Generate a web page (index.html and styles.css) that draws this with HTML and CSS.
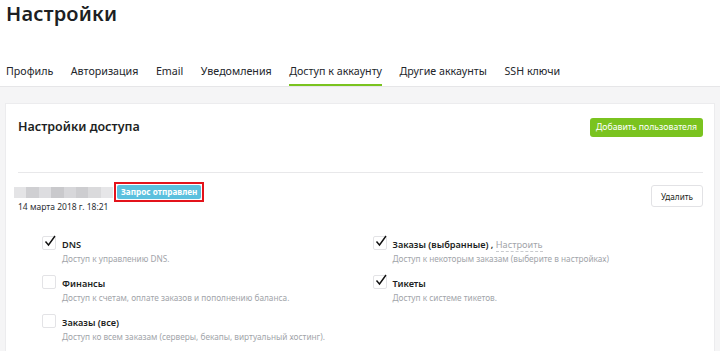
FILE: index.html
```html
<!DOCTYPE html>
<html lang="ru">
<head>
<meta charset="utf-8">
<link rel="stylesheet" href="styles.css">
</head>
<body>
<div class="top">
  <h1 class="page-title">Настройки</h1>
  <nav class="tabs">
    <a class="tab">Профиль</a>
    <a class="tab">Авторизация</a>
    <a class="tab">Email</a>
    <a class="tab">Уведомления</a>
    <a class="tab active">Доступ к аккаунту</a>
    <a class="tab">Другие аккаунты</a>
    <a class="tab">SSH ключи</a>
  </nav>
</div>
<div class="content">
  <div class="card">
    <div class="card-head">
      <h2 class="card-title">Настройки доступа</h2>
      <button class="btn-green">Добавить пользователя</button>
    </div>
    <div class="sep"></div>
    <div class="user-row">
      <div class="user-info">
        <div class="user-line">
          <span class="blur">
            <i class="b1"></i><i class="b2"></i><i class="b3"></i><i class="b4"></i><i class="b5"></i><i class="b6"></i><i class="b7"></i><i class="b8"></i>
          </span>
          <span class="badge-wrap"><span class="badge">Запрос отправлен</span></span>
        </div>
        <div class="date">14 марта 2018 г. 18:21</div>
      </div>
      <button class="btn-white">Удалить</button>
    </div>
    <div class="perms">
      <div class="col">
        <div class="perm">
          <span class="cb checked"><svg viewBox="0 0 14 14" width="14" height="14"><path d="M2.5 7.5 L5.5 11 L12 2" fill="none" stroke="#111" stroke-width="1.4"/></svg></span>
          <div class="perm-text"><div class="perm-name">DNS</div><div class="perm-desc">Доступ к управлению DNS.</div></div>
        </div>
        <div class="perm">
          <span class="cb"></span>
          <div class="perm-text"><div class="perm-name">Финансы</div><div class="perm-desc">Доступ к счетам, оплате заказов и пополнению баланса.</div></div>
        </div>
        <div class="perm">
          <span class="cb"></span>
          <div class="perm-text"><div class="perm-name">Заказы (все)</div><div class="perm-desc">Доступ ко всем заказам (серверы, бекапы, виртуальный хостинг).</div></div>
        </div>
      </div>
      <div class="col">
        <div class="perm">
          <span class="cb checked"><svg viewBox="0 0 14 14" width="14" height="14"><path d="M2.5 7.5 L5.5 11 L12 2" fill="none" stroke="#111" stroke-width="1.4"/></svg></span>
          <div class="perm-text"><div class="perm-name">Заказы (выбранные) , <span class="link">Настроить</span></div><div class="perm-desc">Доступ к некоторым заказам (выберите в настройках)</div></div>
        </div>
        <div class="perm">
          <span class="cb checked"><svg viewBox="0 0 14 14" width="14" height="14"><path d="M2.5 7.5 L5.5 11 L12 2" fill="none" stroke="#111" stroke-width="1.4"/></svg></span>
          <div class="perm-text"><div class="perm-name">Тикеты</div><div class="perm-desc">Доступ к системе тикетов.</div></div>
        </div>
      </div>
    </div>
  </div>
</div>
</body>
</html>
```
FILE: styles.css
```css
* { box-sizing: border-box; }
html, body { margin: 0; padding: 0; height: 100%; }
body {
  font-family: "Noto Sans", "Open Sans", sans-serif;
  color: #1d1f23;
  background: #f5f5f6;
  overflow: hidden;
}
.top {
  background: #fff;
  border-bottom: 1px solid #e6e6e8;
}
.page-title {
  margin: 0;
  padding: 0 0 0 6px;
  font-size: 20px;
  line-height: 27px;
  font-weight: 600;
  letter-spacing: 0.2px;
}
.tabs {
  display: flex;
  gap: 17.5px;
  padding: 35px 0 0 6px;
}
.tab {
  font-size: 10.7px;
  line-height: 18px;
  padding-bottom: 4px;
  border-bottom: 2px solid transparent;
  color: #23262b;
}
.tab.active { border-bottom-color: #7ac31f; }
.content {
  padding: 16px 5px 0 5px;
}
.card {
  background: #fff;
  border: 1px solid #ececee;
  border-bottom: none;
  padding: 14px 11px 0 12px;
  height: 248px;
  overflow: hidden;
}
.card-head {
  display: flex;
  justify-content: space-between;
  align-items: flex-start;
}
.card-title {
  margin: -1px 0 0 0;
  font-size: 12.5px;
  line-height: 20px;
  font-weight: 600;
}
.btn-green {
  font-family: inherit;
  background: #7ac31f;
  color: #fff;
  border: none;
  border-radius: 3px;
  font-size: 8.7px;
  height: 19px;
  padding: 0 6px;
  line-height: 19px;
}
.sep {
  height: 1px;
  background: #e8e8ea;
  margin-top: 35px;
}
.user-row {
  display: flex;
  justify-content: space-between;
  align-items: flex-start;
  padding-top: 9px;
}
.user-info { margin-left: -4px; }
.user-line {
  display: flex;
  align-items: center;
}
.blur {
  display: flex;
  width: 99px;
  height: 11px;
}
.blur i { flex: 1; height: 11px; }
.b1 { background: #e4e4e6; }
.b2 { background: #cfcfd2; }
.b3 { background: #dddde0; }
.b4 { background: #c9c9cc; }
.b5 { background: #d7d7da; }
.b6 { background: #cdcdd0; }
.b7 { background: #dadadc; }
.b8 { background: #e6e6e8; }
.badge-wrap {
  border: 2px solid #e3131b;
  padding: 1px;
  margin-left: 1px;
  display: inline-flex;
}
.badge {
  background: #5bc0de;
  color: #fff;
  font-size: 8.2px;
  font-weight: 700;
  line-height: 14px;
  padding: 0 4px;
  border-radius: 2px;
}
.date {
  font-size: 8.5px;
  line-height: 10px;
  margin: 0 0 0 4px;
  color: #2b2e33;
}
.btn-white {
  font-family: inherit;
  background: #fff;
  border: 1px solid #e2e2e5;
  border-radius: 3px;
  font-size: 8.2px;
  height: 22px;
  padding: 0 9px;
  color: #1d1f23;
  margin-top: 3px;
}
.perms {
  display: flex;
  padding: 23px 0 0 24px;
}
.col {
  width: 335px;
  display: flex;
  flex-direction: column;
  gap: 9px;
}
.perm {
  display: flex;
  gap: 6px;
}
.cb {
  width: 14px;
  height: 14px;
  border: 1px solid #e3e3e6;
  border-radius: 2px;
  flex: none;
  position: relative;
  margin-top: 1px;
}
.cb svg { position: absolute; left: 0; top: -3px; }
.perm-name {
  font-size: 9.2px;
  font-weight: 600;
  line-height: 14px;
  margin-top: 3px;
  color: #1d1f23;
}
.link {
  font-weight: 400;
  color: #a2a5aa;
  border-bottom: 1px dashed #c8cace;
}
.perm-desc {
  font-size: 8.25px;
  line-height: 12px;
  margin-top: 1px;
  color: #a2a5aa;
}
```
